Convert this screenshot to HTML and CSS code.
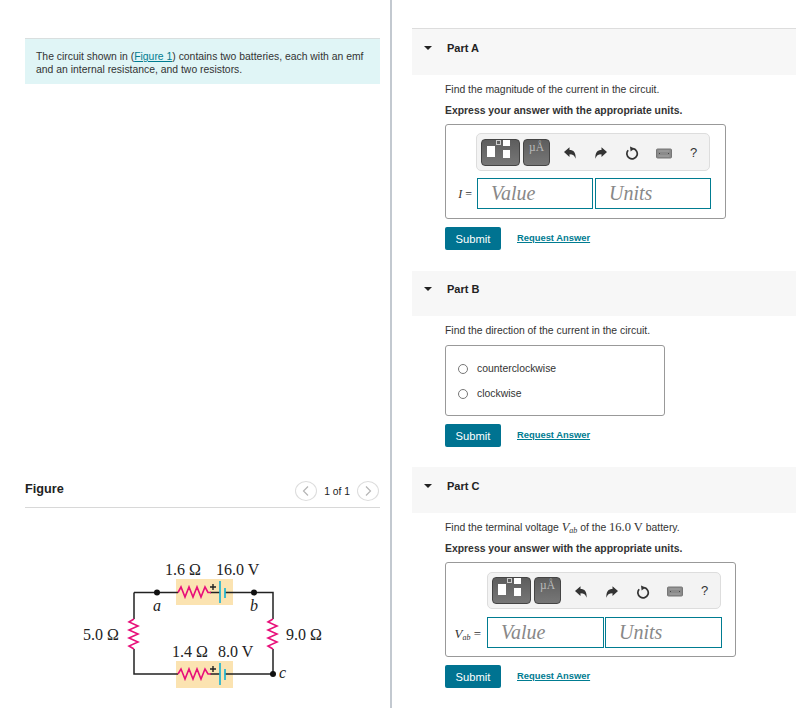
FILE: index.html
```html
<!DOCTYPE html>
<html lang="en">

<head>
    <meta charset="UTF-8">
    <meta name="viewport" content="width=device-width, initial-scale=1.0">
    <title>Circuit problem</title>
    <link rel="stylesheet" href="styles.css">
</head>

<body>
    <svg class="icon-defs" width="0" height="0">
        <symbol id="undo" viewBox="0 0 14 14">
            <path d="M1 6 L6.5 1.2 V4 C10.5 4 13 6.5 12.6 12.8 C11.6 9.6 10 8.2 6.5 8.2 V11 Z" fill="#333" />
        </symbol>
        <symbol id="redo" viewBox="0 0 14 14">
            <path d="M13 6 L7.5 1.2 V4 C3.5 4 1 6.5 1.4 12.8 C2.4 9.6 4 8.2 7.5 8.2 V11 Z" fill="#333" />
        </symbol>
        <symbol id="reset" viewBox="0 0 14 14">
            <path d="M8.2 2.6 A5.2 5.2 0 1 1 3.2 4.2" fill="none" stroke="#333" stroke-width="1.7" />
            <path d="M5 0.4 L9.6 2.6 L5.6 5.6 Z" fill="#333" />
        </symbol>
        <symbol id="keyboard" viewBox="0 0 16 11">
            <rect x="0.5" y="1" width="15" height="9" rx="1" fill="#8a8a8a" stroke="#777" />
            <path d="M2.5 3 H13.5 M2.5 8 H13.5" stroke="#a5a5a5" stroke-width="1" />
            <path d="M3 5.5 H4 M12 5.5 H13" stroke="#444" stroke-width="1" />
        </symbol>
    </svg>

    <div class="container">
        <div class="left-column">
            <div class="intro">
                The circuit shown in (<a href="#">Figure 1</a>) contains two batteries, each with an emf
                and an internal resistance, and two resistors.
            </div>

            <div class="figure-head">
                <h2>Figure</h2>
                <div class="pager">
                    <span class="pager-btn"><svg width="20" height="18" viewBox="0 0 20 18"><path d="M12 4.5 L7.5 9 L12 13.5" fill="none" stroke="#b5b5b5" stroke-width="1.2" /></svg></span>
                    <span>1 of 1</span>
                    <span class="pager-btn"><svg width="20" height="18" viewBox="0 0 20 18"><path d="M8 4.5 L12.5 9 L8 13.5" fill="none" stroke="#b5b5b5" stroke-width="1.2" /></svg></span>
                </div>
            </div>

            <!-- circuit drawing -->
            <svg class="circuit" width="290" height="150" viewBox="0 0 290 150">
                <rect x="116" y="28" width="57" height="26" fill="#fbe3b1" />
                <rect x="116" y="110" width="57" height="27" fill="#fbe3b1" />
                <path d="M74 41.5 H118 M165 41.5 H213 V68 M213 98 V123 M74 68 V41.5 M74 98 V123 H118 M165 123 H213" fill="none" stroke="#222" stroke-width="1.5" />
                <path d="M150 41.5 H160 M150 123 H160" stroke="#222" stroke-width="1.5" />
                <g fill="none" stroke="#e8107a" stroke-width="1.6">
                    <path d="M118 41.5 L121 36 L125 46 L129 36 L133 46 L137 36 L141 46 L145 36 L148 41.5 H151" />
                    <path d="M118 123 L121 118 L125 128 L129 118 L133 128 L137 118 L141 128 L145 118 L148 123 H151" />
                    <path d="M74 68 L69 71 L78 75 L69 79 L78 83 L69 87 L78 91 L69 95 L74 98" />
                    <path d="M213 68 L208 71 L217 75 L208 79 L217 83 L208 87 L217 91 L208 95 L213 98" />
                </g>
                <path d="M160 30 V52 M160 112 V134" stroke="#1fb3d1" stroke-width="1.7" />
                <path d="M165 37 V47 M165 118 V129" stroke="#1fb3d1" stroke-width="1.7" />
                <path d="M150 36 H156 M153 33 V39 M150 118 H156 M153 115 V121" stroke="#222" stroke-width="1.4" />
                <circle cx="97" cy="41.5" r="3" fill="#111" />
                <circle cx="194" cy="41.5" r="3" fill="#111" />
                <circle cx="213" cy="123" r="3" fill="#111" />
                <g class="circuit-text">
                    <text x="105" y="24">1.6 Ω</text>
                    <text x="156" y="24">16.0 V</text>
                    <text x="23" y="89">5.0 Ω</text>
                    <text x="226" y="89">9.0 Ω</text>
                    <text x="112" y="106">1.4 Ω</text>
                    <text x="158" y="106">8.0 V</text>
                    <text class="var" x="93" y="60">a</text>
                    <text class="var" x="190" y="60">b</text>
                    <text class="var" x="219" y="127">c</text>
                </g>
            </svg>
        </div>

        <div class="right-column">
            <!-- Part A -->
            <div class="part-head part-first"><span class="caret"></span>Part A</div>
            <div class="part-body">
                <p class="prompt">Find the magnitude of the current in the circuit.</p>
                <p class="hint">Express your answer with the appropriate units.</p>
                <div class="answer-box">
                    <div class="toolbar">
                        <span class="tool-btn tool-wide"><i class="sq big"></i><i class="sq tiny"></i><i class="sq small-top"></i><i class="sq small-bottom"></i></span>
                        <span class="tool-btn tool-unit">µÅ</span>
                        <svg class="tool-icon"><use href="#undo" /></svg>
                        <svg class="tool-icon"><use href="#redo" /></svg>
                        <svg class="tool-icon"><use href="#reset" /></svg>
                        <svg class="tool-icon tool-key"><use href="#keyboard" /></svg>
                        <span class="tool-help">?</span>
                    </div>
                    <div class="answer-row">
                        <span class="answer-label"><em>I</em> =</span>
                        <span class="field">Value</span>
                        <span class="field">Units</span>
                    </div>
                </div>
                <div class="actions">
                    <button>Submit</button>
                    <a href="#">Request Answer</a>
                </div>
            </div>

            <!-- Part B -->
            <div class="part-head part-short"><span class="caret"></span>Part B</div>
            <div class="part-body part-choice">
                <p class="prompt">Find the direction of the current in the circuit.</p>
                <div class="choice-box">
                    <label><span class="radio"></span>counterclockwise</label>
                    <label><span class="radio"></span>clockwise</label>
                </div>
                <div class="actions">
                    <button>Submit</button>
                    <a href="#">Request Answer</a>
                </div>
            </div>

            <!-- Part C -->
            <div class="part-head"><span class="caret"></span>Part C</div>
            <div class="part-body">
                <p class="prompt">Find the terminal voltage <span class="math"><em>V<sub>ab</sub></em></span> of the <span class="math">16.0 V</span> battery.</p>
                <p class="hint">Express your answer with the appropriate units.</p>
                <div class="answer-box answer-box-c">
                    <div class="toolbar">
                        <span class="tool-btn tool-wide"><i class="sq big"></i><i class="sq tiny"></i><i class="sq small-top"></i><i class="sq small-bottom"></i></span>
                        <span class="tool-btn tool-unit">µÅ</span>
                        <svg class="tool-icon"><use href="#undo" /></svg>
                        <svg class="tool-icon"><use href="#redo" /></svg>
                        <svg class="tool-icon"><use href="#reset" /></svg>
                        <svg class="tool-icon tool-key"><use href="#keyboard" /></svg>
                        <span class="tool-help">?</span>
                    </div>
                    <div class="answer-row">
                        <span class="answer-label"><em>V<sub>ab</sub></em> =</span>
                        <span class="field">Value</span>
                        <span class="field">Units</span>
                    </div>
                </div>
                <div class="actions">
                    <button>Submit</button>
                    <a href="#">Request Answer</a>
                </div>
            </div>
        </div>
    </div>
</body>

</html>
```

FILE: styles.css
```css
body,
html {
    margin: 0;
    padding: 0;
    height: 100%;
    overflow: hidden;
    background: #fff;
    font-family: "Liberation Sans", Arial, sans-serif;
    color: #333;
}

a {
    color: #007c91;
}

.icon-defs {
    position: absolute;
}

.container {
    display: flex;
    height: 708px;
}

/* left column */
.left-column {
    width: 392px;
    flex: none;
    box-sizing: border-box;
    border-right: 2px solid #c3c9d0;
    padding: 38px 10px 0 25px;
}

.intro {
    height: 46px;
    box-sizing: border-box;
    padding: 11px 11px 0;
    border-top: 1px solid #d9dfdf;
    background: #e0f5f6;
    font-size: 10.4px;
    line-height: 13px;
}

.figure-head {
    display: flex;
    justify-content: space-between;
    align-items: center;
    height: 28px;
    margin-top: 391px;
    padding-bottom: 4px;
    border-bottom: 1px solid #d8d8d8;
}

.figure-head h2 {
    margin: 0;
    font-size: 12.7px;
    color: #222;
}

.pager {
    display: flex;
    align-items: center;
    gap: 7px;
    margin-top: 4px;
    padding-right: 1px;
    font-size: 10.3px;
    color: #222;
}

.pager-btn {
    width: 22px;
    height: 20px;
    box-sizing: border-box;
    border: 1px solid #ddd;
    border-radius: 50%;
}

.pager-btn svg {
    display: block;
}

.circuit {
    display: block;
    margin: 43px 0 0 35px;
}

.circuit-text text {
    font-family: "Liberation Serif", "Times New Roman", serif;
    font-size: 16px;
    fill: #222;
}

.circuit-text .var {
    font-style: italic;
}

/* right column */
.right-column {
    flex: 1;
    padding: 28px 0 0 20px;
    min-width: 0;
}

.part-head {
    height: 46px;
    box-sizing: border-box;
    padding: 13px 0 0 35px;
    position: relative;
    background: #f7f7f7;
    font-size: 11px;
    font-weight: bold;
    color: #222;
}

.part-first {
    height: 47px;
    border-top: 1px solid #ddd;
}

.part-short {
    height: 45px;
    padding-top: 12px;
}

.caret {
    position: absolute;
    left: 12px;
    top: 17px;
    border-left: 4px solid transparent;
    border-right: 4px solid transparent;
    border-top: 4px solid #222;
}

.part-short .caret {
    top: 16px;
}

.part-body {
    padding: 8px 0 21px 33px;
}

.part-choice {
    padding-bottom: 20px;
}

.prompt,
.hint {
    margin: 0;
    font-size: 10.4px;
    line-height: 13px;
}

.hint {
    margin-top: 8px;
    font-weight: bold;
}

.math {
    font-family: "Liberation Serif", "Times New Roman", serif;
    font-size: 12.5px;
    line-height: 0;
}

.math sub {
    font-size: 8px;
    line-height: 0;
    vertical-align: -2px;
}

.answer-box {
    width: 281px;
    height: 95px;
    box-sizing: border-box;
    margin-top: 7px;
    padding: 8px 0 0 30px;
    border: 1px solid #999;
    border-radius: 3px;
}

.answer-box-c {
    width: 291px;
    padding: 9px 0 0 41px;
}

.toolbar {
    display: flex;
    align-items: center;
    width: 234px;
    height: 38px;
    box-sizing: border-box;
    padding-left: 4px;
    background: #f3f3f3;
    border: 1px solid #ddd;
    border-radius: 5px;
}

.answer-box-c .toolbar {
    height: 37px;
}

.tool-btn {
    display: block;
    position: relative;
    height: 27px;
    box-sizing: border-box;
    background: linear-gradient(#5d5d5d, #777);
    border: 1px solid #444;
    border-radius: 4px;
}

.tool-wide {
    width: 39px;
}

.tool-unit {
    width: 27px;
    margin: 0 13px 0 3px;
    padding-top: 1px;
    color: #bbb;
    font-family: "Liberation Serif", "Times New Roman", serif;
    font-size: 11.5px;
    text-align: center;
}

.sq {
    position: absolute;
    background: #fff;
}

.big {
    left: 5px;
    top: 6px;
    width: 8px;
    height: 11px;
}

.tiny {
    left: 14px;
    top: 0;
    width: 3px;
    height: 3px;
    background: none;
    border: 1px solid #ccc;
}

.small-top {
    left: 21px;
    top: 0;
    width: 7px;
    height: 6px;
}

.small-bottom {
    left: 21px;
    top: 10px;
    width: 7px;
    height: 8px;
}

.tool-icon {
    width: 14px;
    height: 14px;
    margin: 2px 17px 0 0;
    flex: none;
}

.tool-key {
    width: 16px;
    height: 11px;
    margin-right: 18px;
}

.tool-help {
    font-size: 13px;
    color: #333;
}

.answer-row {
    display: flex;
    margin: 7px 0 0 1px;
    position: relative;
}

.answer-box-c .answer-row {
    margin: 8px 0 0;
}

.answer-label {
    position: absolute;
    right: 100%;
    top: 9px;
    margin-right: 5px;
    white-space: nowrap;
    font-family: "Liberation Serif", "Times New Roman", serif;
    font-size: 12px;
}

.answer-box-c .answer-label {
    margin-right: 6px;
    font-size: 13px;
}

.answer-label sub {
    font-size: 8px;
    line-height: 0;
    vertical-align: -2px;
}

.field {
    width: 116px;
    height: 31px;
    box-sizing: border-box;
    margin-right: 2px;
    padding-left: 13px;
    border: 1px solid #007c91;
    color: #888;
    font-family: "Liberation Serif", "Times New Roman", serif;
    font-size: 20px;
    font-style: italic;
    line-height: 29px;
}

.answer-box-c .field {
    width: 117px;
    margin-right: 1px;
}

.actions {
    display: flex;
    align-items: center;
    gap: 16px;
    margin-top: 8px;
}

.actions button {
    width: 56px;
    height: 23px;
    padding: 0;
    border: 0;
    border-radius: 2px;
    background: #007391;
    color: #fff;
    font-family: inherit;
    font-size: 11.2px;
}

.actions a {
    margin-bottom: 2px;
    font-size: 9.4px;
    font-weight: bold;
}

.choice-box {
    width: 220px;
    height: 71px;
    box-sizing: border-box;
    margin-top: 8px;
    padding-top: 10px;
    border: 1px solid #999;
    border-radius: 3px;
    font-size: 10.4px;
}

.choice-box label {
    display: flex;
    align-items: center;
    height: 25px;
    padding-left: 12px;
}

.radio {
    width: 10px;
    height: 10px;
    box-sizing: border-box;
    margin-right: 9px;
    border: 1px solid #777;
    border-radius: 50%;
    background: #fff;
}
```
